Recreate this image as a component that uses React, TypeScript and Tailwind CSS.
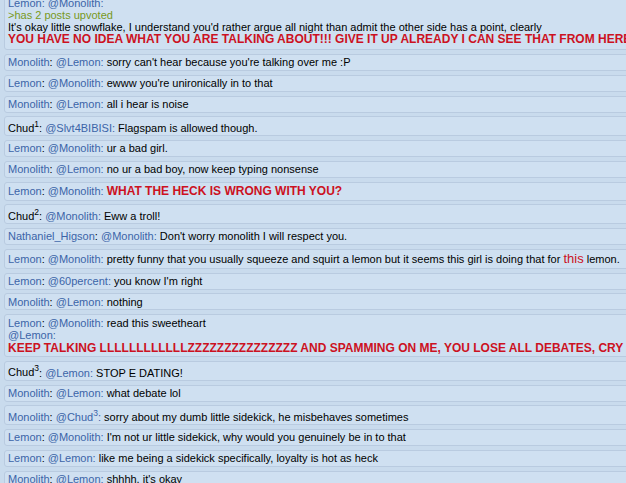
import React from "react";

type Msg = {
  name: string;
  sup?: string;
  to?: string;
  toSup?: string;
  text?: React.ReactNode;
  extra?: React.ReactNode;
  plainName?: boolean;
};

const RED = "font-bold text-[12px] text-[#cc1122] whitespace-nowrap";
const SUP = "static align-super text-[8.5px] leading-[normal]";

const messages: Msg[] = [
  { name: "Monolith", to: "Lemon", text: "sorry can't hear because you're talking over me :P" },
  { name: "Lemon", to: "Monolith", text: "ewww you're unironically in to that" },
  { name: "Monolith", to: "Lemon", text: "all i hear is noise" },
  { name: "Chud", sup: "1", plainName: true, to: "Slvt4BIBISI", text: "Flagspam is allowed though." },
  { name: "Lemon", to: "Monolith", text: "ur a bad girl." },
  { name: "Monolith", to: "Lemon", text: "no ur a bad boy, now keep typing nonsense" },
  { name: "Lemon", to: "Monolith", text: <span className={RED}>WHAT THE HECK IS WRONG WITH YOU?</span> },
  { name: "Chud", sup: "2", plainName: true, to: "Monolith", text: "Eww a troll!" },
  { name: "Nathaniel_Higson", to: "Monolith", text: "Don't worry monolith I will respect you." },
  {
    name: "Lemon",
    to: "Monolith",
    text: (
      <>
        pretty funny that you usually squeeze and squirt a lemon but it seems this girl is doing that for{" "}
        <span className="text-[13px] text-[#cc1122]">this</span> lemon.
      </>
    ),
  },
  { name: "Lemon", to: "60percent", text: "you know I'm right" },
  { name: "Monolith", to: "Lemon", text: "nothing" },
  {
    name: "Lemon",
    to: "Monolith",
    text: "read this sweetheart",
    extra: (
      <>
        <div className="leading-[12px] text-[#3b64a8]">@Lemon:</div>
        <div className={RED + " leading-[14px]"}>
          KEEP TALKING LLLLLLLLLLLLZZZZZZZZZZZZZZZ AND SPAMMING ON ME, YOU LOSE ALL DEBATES, CRY ON ABOUT IT
        </div>
      </>
    ),
  },
  { name: "Chud", sup: "3", plainName: true, to: "Lemon", text: "STOP E DATING!" },
  { name: "Monolith", to: "Lemon", text: "what debate lol" },
  { name: "Monolith", to: "Chud", toSup: "3", text: "sorry about my dumb little sidekick, he misbehaves sometimes" },
  { name: "Lemon", to: "Monolith", text: "I'm not ur little sidekick, why would you genuinely be in to that" },
  { name: "Lemon", to: "Lemon", text: "like me being a sidekick specifically, loyalty is hot as heck" },
  { name: "Monolith", to: "Lemon", text: "shhhh, it's okay" },
];

function Row({ m }: { m: Msg }) {
  return (
    <div className="ml-[4px] -mr-4 rounded-[3px] border border-[#b9cbe0] bg-[#cfe0f1] px-[3px] py-[1.5px] leading-[normal]">
      <div className="whitespace-nowrap">
        <span className={m.plainName ? "text-black" : "text-[#3b64a8]"}>
          {m.name}
          {m.sup && <sup className={SUP}>{m.sup}</sup>}
        </span>
        <span className="text-black">: </span>
        {m.to && (
          <>
            <span className="text-[#3b64a8]">
              @{m.to}
              {m.toSup && <sup className={SUP}>{m.toSup}</sup>}
            </span>
            <span className="text-[#3b64a8]">: </span>
          </>
        )}
        <span className="text-black">{m.text}</span>
      </div>
      {m.extra}
    </div>
  );
}

export default function App() {
  return (
    <div
      className="h-[483px] w-[626px] overflow-hidden bg-[#c9dbed] text-[11px]"
      style={{ fontFamily: '"Liberation Sans", Arial, sans-serif' }}
    >
      <div className="-mt-[5px] flex flex-col gap-[3.85px]">
        {/* TOP POST (cut off) */}
        <div className="ml-[4px] -mr-4 rounded-[3px] border border-[#b9cbe0] bg-[#cfe0f1] px-[3px] pt-[1px] pb-[3px] leading-[12px]">
          <div className="text-[#3b64a8]">Lemon: @Monolith:</div>
          <div className="text-[#789922]">&gt;has 2 posts upvoted</div>
          <div className="whitespace-nowrap text-black">
            It's okay little snowflake, I understand you'd rather argue all night than admit the other side has a point, clearly
          </div>
          <div className={RED + " leading-[13px]"}>
            YOU HAVE NO IDEA WHAT YOU ARE TALKING ABOUT!!! GIVE IT UP ALREADY I CAN SEE THAT FROM HERE
          </div>
        </div>

        {messages.map((m, i) => (
          <Row key={i} m={m} />
        ))}
      </div>
    </div>
  );
}
